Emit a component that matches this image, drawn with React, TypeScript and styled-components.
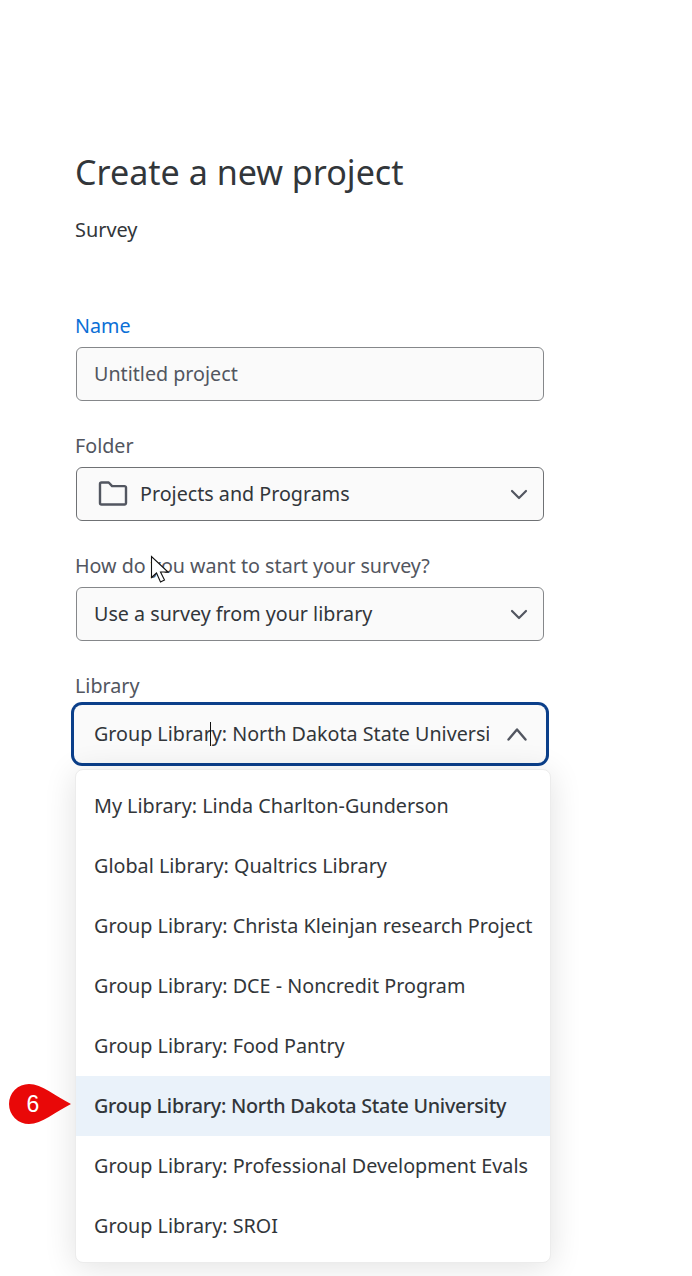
import React from 'react';
import styled, { createGlobalStyle } from 'styled-components';

const GlobalStyle = createGlobalStyle`
  html, body {
    margin: 0;
    padding: 0;
    background: #fff;
    overflow: hidden;
  }
  body {
    font-family: "Noto Sans", "Open Sans", sans-serif;
    color: #32363a;
  }
`;

const Page = styled.div`
  position: relative;
  width: 692px;
  height: 1276px;
  overflow: hidden;
  padding: 151px 0 0 76px;
  box-sizing: border-box;
`;

const Title = styled.h1`
  margin: 0 0 0 -1px;
  font-size: 34.1px;
  line-height: 42px;
  font-weight: 400;
  color: #32363a;
`;

const Subtitle = styled.p`
  margin: 24px 0 70px -1px;
  font-size: 19.9px;
  line-height: 26px;
  color: #32363a;
`;

const Form = styled.div`
  display: flex;
  flex-direction: column;
  gap: 32px;
  width: 468px;
`;

const Field = styled.div`
  position: relative;
  display: flex;
  flex-direction: column;
  gap: 8px;
`;

const Label = styled.label<{ $active?: boolean }>`
  margin-left: -1px;
  font-size: 19.7px;
  line-height: 26px;
  color: ${p => (p.$active ? '#0b6fd6' : '#525660')};
`;

const Control = styled.div<{ $focused?: boolean; $strong?: boolean }>`
  position: relative;
  display: flex;
  align-items: center;
  height: 54px;
  box-sizing: border-box;
  padding: 0 15px 2px 17px;
  gap: 14px;
  font-size: 19.7px;
  background: #fafafa;
  border: ${p => (p.$focused ? 'none' : `${p.$strong ? '1.5px' : '1px'} solid ${p.$strong ? '#6f7174' : '#85878a'}`)};
  box-shadow: ${p => (p.$focused ? '0 0 0 2px #fafafa, 0 0 0 5px #0b3f8a' : 'none')};
  border-radius: ${p => (p.$focused ? '6px' : '6px')};
  ${p => p.$focused && 'padding-left: 18px;'}
`;

const Placeholder = styled.span`
  color: #525660;
`;

const Value = styled.span<{ $clip?: boolean }>`
  flex: 1;
  min-width: 0;
  white-space: nowrap;
  overflow: hidden;
  color: #32363a;
  ${p => p.$clip && 'flex: none; width: 395px;'}
`;

const FolderIcon = styled.svg`
  flex: none;
  width: 30px;
  height: 26px;
  margin: 2px -2px 0 4px;
  fill: none;
  stroke: #525660;
  stroke-width: 2.4;
  stroke-linejoin: round;
`;

const Chevron = styled.svg<{ $large?: boolean }>`
  flex: none;
  width: ${p => (p.$large ? '20px' : '18px')};
  height: ${p => (p.$large ? '14px' : '11px')};
  margin: 2px ${p => (p.$large ? '2px' : '0')} 0 auto;
  fill: none;
  stroke: #525660;
  stroke-width: ${p => (p.$large ? 2.4 : 2.2)};
  stroke-linecap: round;
  stroke-linejoin: round;
`;

const TextCaret = styled.span`
  position: absolute;
  left: 134px;
  top: 15px;
  width: 1px;
  height: 24px;
  background: #111;
`;

const Menu = styled.ul`
  position: absolute;
  left: -1px;
  top: 96px;
  width: 476px;
  margin: 0;
  padding: 6px 0;
  box-sizing: border-box;
  list-style: none;
  background: #fff;
  border: 1px solid #ececec;
  border-radius: 8px;
  box-shadow: 0 4px 32px rgba(0, 0, 0, 0.12);
`;

const MenuItem = styled.li<{ $selected?: boolean }>`
  height: 60px;
  box-sizing: border-box;
  padding: 0 0 2px 18px;
  display: flex;
  align-items: center;
  font-size: 19.75px;
  white-space: nowrap;
  color: #32363a;
  font-weight: ${p => (p.$selected ? 500 : 400)};
  letter-spacing: ${p => (p.$selected ? '-0.26px' : '0')};
  background: ${p => (p.$selected ? '#eaf2fa' : 'transparent')};
`;

const Badge = styled.div`
  position: absolute;
  left: 9px;
  top: 1084px;
  width: 62px;
  height: 40px;
`;

const BadgeShape = styled.svg`
  display: block;
  width: 62px;
  height: 40px;
  fill: #e90808;
`;

const BadgeNumber = styled.span`
  position: absolute;
  left: 0;
  top: 0;
  width: 48px;
  line-height: 40px;
  text-align: center;
  font-family: "Liberation Sans", Arial, sans-serif;
  font-size: 23px;
  color: #fff;
`;

const Pointer = styled.svg`
  position: absolute;
  left: 150px;
  top: 555px;
  width: 20px;
  height: 29px;
  fill: #fff;
  stroke: #111;
  stroke-width: 1.1;
  stroke-linejoin: miter;
`;

const libraries = [
  'My Library: Linda Charlton-Gunderson',
  'Global Library: Qualtrics Library',
  'Group Library: Christa Kleinjan research Project',
  'Group Library: DCE - Noncredit Program',
  'Group Library: Food Pantry',
  'Group Library: North Dakota State University',
  'Group Library: Professional Development Evals',
  'Group Library: SROI',
];

const SELECTED = 'Group Library: North Dakota State University';

const App: React.FC = () => (
  <Page>
    <GlobalStyle />
    <Title>Create a new project</Title>
    <Subtitle>Survey</Subtitle>
    <Form>
      <Field>
        <Label $active>Name</Label>
        <Control>
          <Placeholder>Untitled project</Placeholder>
        </Control>
      </Field>
      <Field>
        <Label>Folder</Label>
        <Control $strong>
          <FolderIcon viewBox="0 0 30 26">
            <path d="M2 3a1.5 1.5 0 0 1 1.5-1.5h7.2l3.4 3.6h12.4a1.5 1.5 0 0 1 1.5 1.5v15.4a1.5 1.5 0 0 1-1.5 1.5h-23a1.5 1.5 0 0 1-1.5-1.5z" />
          </FolderIcon>
          <Value>Projects and Programs</Value>
          <Chevron viewBox="0 0 18 11">
            <path d="M2 2l7 7 7-7" />
          </Chevron>
        </Control>
      </Field>
      <Field>
        <Label>How do you want to start your survey?</Label>
        <Control>
          <Value>Use a survey from your library</Value>
          <Chevron viewBox="0 0 18 11">
            <path d="M2 2l7 7 7-7" />
          </Chevron>
        </Control>
      </Field>
      <Field>
        <Label>Library</Label>
        <Control $focused>
          <Value $clip>{SELECTED}</Value>
          <Chevron $large viewBox="0 0 20 14">
            <path d="M1.5 12.5l8.5-10 8.5 10" />
          </Chevron>
          <TextCaret />
        </Control>
        <Menu>
          {libraries.map(name => (
            <MenuItem key={name} $selected={name === SELECTED}>
              {name}
            </MenuItem>
          ))}
        </Menu>
      </Field>
    </Form>
    <Badge>
      <BadgeShape viewBox="0 0 62 40">
        <path d="M20 0C33 0 46 12 62 20C46 28 33 40 20 40A20 20 0 0 1 20 0z" />
      </BadgeShape>
      <BadgeNumber>6</BadgeNumber>
    </Badge>
    <Pointer viewBox="0 0 20 29">
      <path d="M1.5 1.5V22.5L6.5 18L10.5 27L14.5 25L10.5 17H18z" />
    </Pointer>
  </Page>
);

export default App;
